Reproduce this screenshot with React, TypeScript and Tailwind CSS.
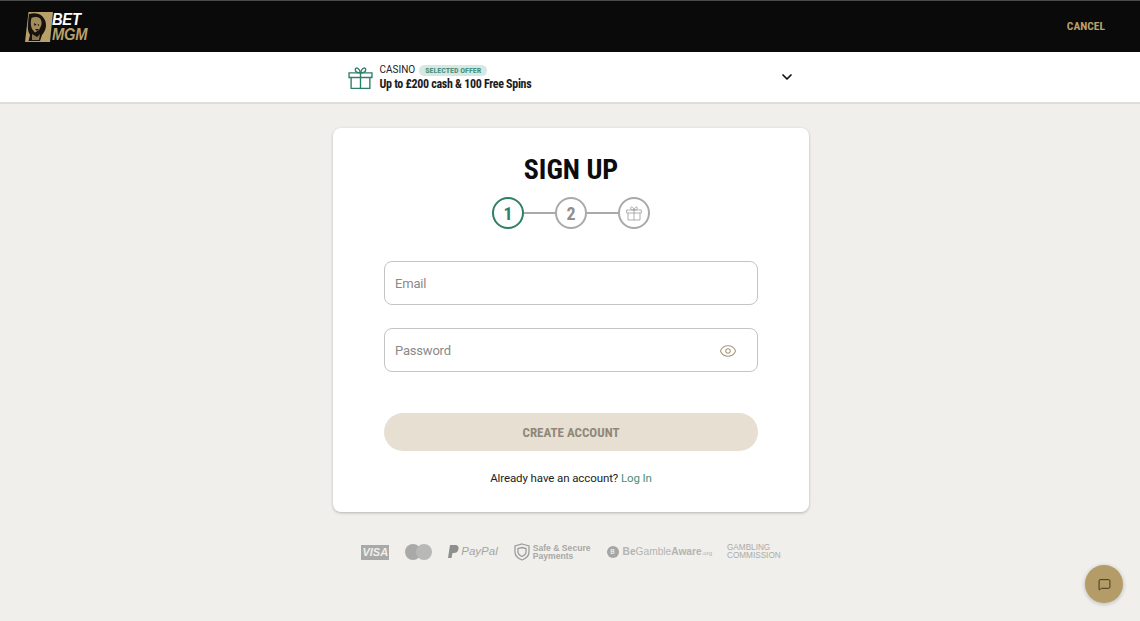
import { ChevronDown, Eye, MessageSquare } from 'lucide-react';

const condensed = "font-['Roboto',sans-serif] font-bold font-stretch-[75%]";

function GiftIcon({ size, color, width = 1.5 }: { size: number; color: string; width?: number }) {
  return (
    <svg width={size} height={size} viewBox="0 0 24 24" fill="none" stroke={color} strokeWidth={width}>
      <path d="M1 7.500h22v4.500H1z" />
      <path d="M3 12v10.500h18V12" />
      <path d="M12 7.500v15" />
      <path d="M12 7.500C9.500 7.500 7 7 7 4.500S10.500 2 12 7.500Z" />
      <path d="M12 7.500c2.500 0 5-.5 5-3S13.500 2 12 7.500Z" />
    </svg>
  );
}

function Logo() {
  return (
    <div className="flex items-center">
      <svg width="28" height="30" viewBox="0 0 28 30">
        <path d="M3.500 0H28L25 30H0Z" fill="#b9a06a" />
        <path d="M4 2c5-1.500 10-1 13 2 3 3 4 6 4 9.500 0 4-2 7-4 9.500l-2 6H3.500L5 23C3 20 2.500 16 3 12c.2-3.500.5-7 1-10Z" fill="#17130c" />
        <path d="M6.500 6c2.500-1.500 7-1.500 9 1 1.500 2.500 1.500 5.500 0 8l-1.500 3-4 2.500L7 17c-1.500-3.500-1.500-7.500-.5-11Z" fill="#a28c5c" />
        <path d="M9 11l2.500 1.500L9.500 14Zm5 1l-1.500 1 1.500 1ZM10 17h4l-2 2Z" fill="#17130c" />
        <path d="M7 22l5 3 3-3-1 6H7Z" fill="#8a7650" />
      </svg>
      <div className="-ml-px flex origin-left scale-x-[0.92] flex-col font-['Liberation_Sans',sans-serif] text-[16px] font-bold italic leading-[15px] tracking-[-0.3px]">
        <span className="text-white">BET</span>
        <span className="text-[#b9a06a]">MGM</span>
      </div>
    </div>
  );
}

function Step({ children, active }: { children: React.ReactNode; active?: boolean }) {
  return (
    <div
      className={`flex h-8 w-8 items-center justify-center rounded-full border-2 bg-white text-[18px] ${condensed} ${
        active ? 'border-[#2f7f68] text-[#2f7f68]' : 'border-[#a9a9a9] text-[#8f8f8f]'
      }`}
    >
      {children}
    </div>
  );
}

function Field({ label, icon }: { label: string; icon?: boolean }) {
  return (
    <div className="flex h-[44px] items-center justify-between rounded-lg border border-[#c4c4c4] pl-[10px] pr-[20px] pt-px">
      <span className="text-[13px] tracking-[-0.2px] text-[#8a8a8a]">{label}</span>
      {icon && <Eye size={18} strokeWidth={1.4} className="text-[#a99a78]" />}
    </div>
  );
}

function Trust() {
  return (
    <div className="mt-[31px] flex items-center justify-center text-[#a8a8a6]">
      <div className="flex h-[15px] w-[28px] items-center justify-center bg-[#a9a9a7] font-['Liberation_Sans',sans-serif] text-[11px] font-bold italic text-[#f0efeb]">
        VISA
      </div>
      <svg width="27" height="16" viewBox="0 0 27 16" className="ml-[16px]">
        <circle cx="8" cy="8" r="8" fill="#a9a9a7" />
        <circle cx="19" cy="8" r="8" fill="#b8b8b6" />
      </svg>
      <svg width="11" height="14" viewBox="0 0 11 14" className="ml-[16px]">
        <path d="M2 0h5c3 0 4 2 3.500 4C10 7 8 8 6 8H4.500L3.500 13H0Z" fill="#8f8f8d" />
      </svg>
      <span className="ml-[2px] font-['Liberation_Sans',sans-serif] text-[11.500px] italic text-[#a5a5a3]">PayPal</span>
      <svg width="16" height="18" viewBox="0 0 16 18" fill="none" stroke="#9c9c9a" className="ml-[16px]">
        <path d="M8 1l7 2v6c0 4-3 6.500-7 8-4-1.500-7-4-7-8V3Z" strokeWidth="1.300" />
        <path d="M8 4.500l4 1v3.500c0 2-2 3.500-4 4.500-2-1-4-2.500-4-4.500V5.500Z" strokeWidth="1.300" />
      </svg>
      <div className="ml-[3px] font-['Liberation_Sans',sans-serif] text-[8.600px] font-bold leading-[8px] text-[#a8a8a6]">
        <div>Safe &amp; Secure</div>
        <div>Payments</div>
      </div>
      <div className="ml-[16px] flex h-3 w-3 items-center justify-center rounded-full bg-[#a5a5a3] text-[7px] font-bold text-[#e6e6e2]">B</div>
      <div className="ml-[4px] font-['Liberation_Sans',sans-serif] text-[10.200px] text-[#b4b4b2]">
        <span className="font-bold">Be</span>
        <span>Gamble</span>
        <span className="font-bold">Aware</span>
        <span className="text-[6px]">.org</span>
      </div>
      <div className="ml-[15px] font-['Liberation_Sans',sans-serif] text-[8.200px] leading-[8px] text-[#ababa9]">
        <div>GAMBLING</div>
        <div>COMMISSION</div>
      </div>
    </div>
  );
}

export default function App() {
  return (
    <div className="h-[621px] overflow-hidden bg-[#f0efeb] font-['Roboto',sans-serif]">
      <header className="flex h-[52px] items-center justify-between border-t border-[#4a4a4a] bg-[#0a0a0a] pl-[25px] pr-[35px]">
        <Logo />
        <span className={`text-[11.500px] text-[#b9a06a] ${condensed}`}>CANCEL</span>
      </header>

      <div className="flex h-[52px] justify-center border-b-2 border-[#dcdcda] bg-white">
        <div className="flex w-[447px] translate-x-px items-center">
          <GiftIcon size={25} color="#2f7f68" width={1.3} />
          <div className="ml-[7px] flex-1">
            <div className="flex items-center gap-1 text-[10px] leading-[14px] text-[#222]">
              CASINO
              <span className={`rounded-full bg-[#d5e8e1] px-[6px] text-[8px] leading-[11px] text-[#4a8f7a] ${condensed}`}>SELECTED OFFER</span>
            </div>
            <div className={`text-[12px] leading-[14px] tracking-[-0.3px] text-[#1c1c1c] ${condensed}`}>Up to £200 cash &amp; 100 Free Spins</div>
          </div>
          <ChevronDown size={16} strokeWidth={2.6} className="text-[#111]" />
        </div>
      </div>

      <main className="mx-auto mt-[24px] w-[476px] translate-x-px">
        <div className="h-[384px] rounded-lg bg-white px-[51px] pt-[25px] shadow-[0_1px_3px_rgba(0,0,0,0.25)]">
          <h1 className={`text-center text-[28px] leading-[34px] text-[#0c0c0c] ${condensed}`}>SIGN UP</h1>
          <div className="mt-[10px] flex items-center justify-center">
            <Step active>1</Step>
            <div className="h-[2px] w-[31px] bg-[#a9a9a9]" />
            <Step>2</Step>
            <div className="h-[2px] w-[31px] bg-[#a9a9a9]" />
            <Step>
              <GiftIcon size={16} color="#9a9a9a" width={1.2} />
            </Step>
          </div>
          <div className="mt-[32px] flex flex-col gap-[23px]">
            <Field label="Email" />
            <Field label="Password" icon />
          </div>
          <button className={`mt-[41px] h-[38px] w-full rounded-full bg-[#e6dfd2] pt-px text-[13px] text-[#8f887a] ${condensed}`}>CREATE ACCOUNT</button>
          <p className="mt-[19px] text-center text-[11.500px] leading-[16px] tracking-[-0.1px] text-[#222]">
            Already have an account? <span className="text-[#4a8f7a]">Log In</span>
          </p>
        </div>
        <Trust />
      </main>

      <button className="fixed bottom-[18px] right-[17px] flex h-[38px] w-[38px] items-center justify-center rounded-full bg-[#b49c68] shadow-[0_1px_4px_rgba(0,0,0,0.25)]">
        <MessageSquare size={13} strokeWidth={1.5} className="text-[#2a2010]" />
      </button>
    </div>
  );
}
